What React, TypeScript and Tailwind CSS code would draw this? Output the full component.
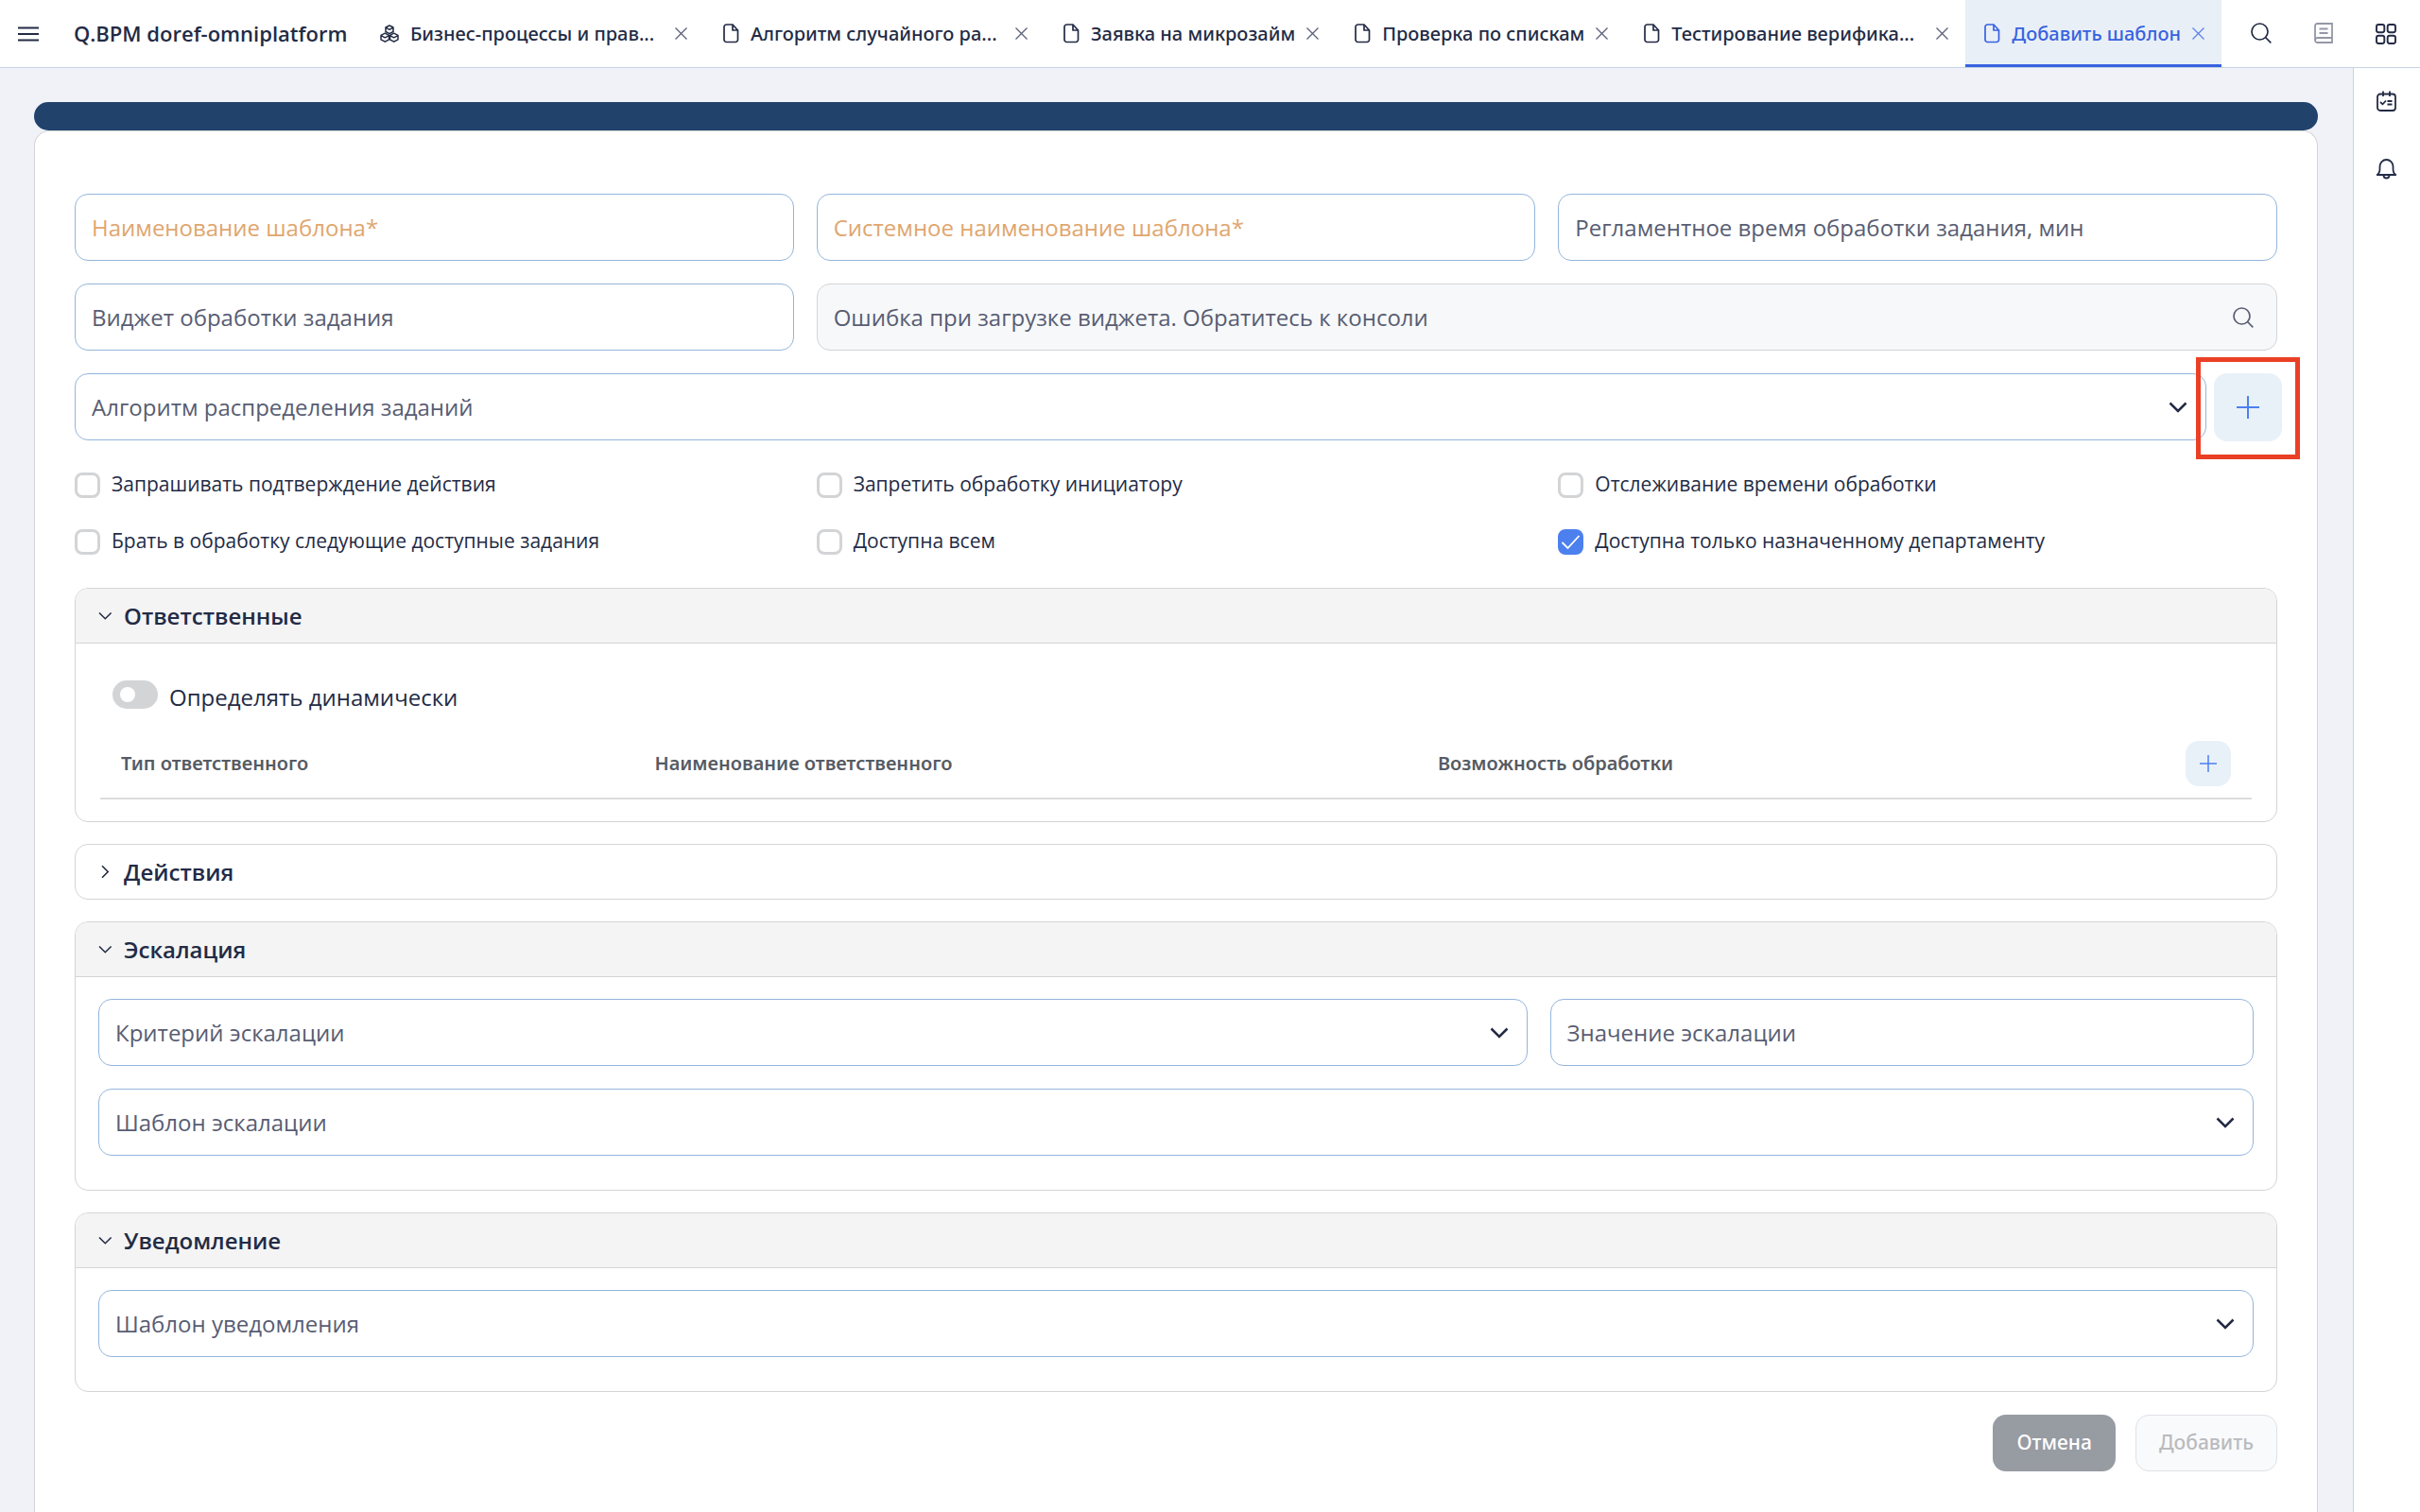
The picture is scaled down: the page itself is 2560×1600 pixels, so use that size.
import React, { useState } from "react";

function DocIcon() {
  return (
    <svg className="h-[22px] w-[17px] shrink-0" viewBox="0 0 17 22" fill="none" stroke="currentColor" strokeWidth="1.7" strokeLinejoin="round">
      <path d="M10 1H3.5A2.5 2.5 0 0 0 1 3.500V17A2.500 2.500 0 0 0 3.500 19.500H13A2.500 2.500 0 0 0 15.500 17V7Z" />
      <path d="M10 1V7H15.500" />
    </svg>
  );
}

function ProcessIcon() {
  return (
    <svg className="h-[22px] w-5 shrink-0" viewBox="0 0 20 22" fill="none" stroke="currentColor" strokeWidth="1.5" strokeLinejoin="round">
      <path d="M10 2L14 4V8.500L10 10.700L6 8.500V4ZM6 4.200L10 6.300L14 4.200" />
      <path d="M5.300 10.200L9.500 12.400V16.800L5.300 19.200L1 16.800V12.400ZM1 12.600L5.300 14.800L9.500 12.600" />
      <path d="M14.700 10.200L19 12.400V16.800L14.700 19.200L10.500 16.800V12.400ZM10.500 12.600L14.700 14.800L19 12.600" />
    </svg>
  );
}

function CloseIcon() {
  return (
    <svg className="size-[13px]" viewBox="0 0 13 13" stroke="currentColor" strokeWidth="1.3">
      <path d="M0.500 0.500L12.500 12.500M12.500 0.500L0.500 12.500" />
    </svg>
  );
}

function SearchIcon() {
  return (
    <svg className="size-[22px]" viewBox="0 0 22 22" fill="none" stroke="currentColor" strokeWidth="1.700">
      <circle cx="9.500" cy="9.500" r="8.500" />
      <path d="M15.500 15.500L21.300 21.300" />
    </svg>
  );
}

function BookIcon() {
  return (
    <svg className="size-[22px]" viewBox="0 0 22 22" fill="none" stroke="currentColor" strokeWidth="1.800">
      <path d="M20 1H4.500A2.500 2.500 0 0 0 2 3.500V18.500A2.500 2.500 0 0 0 4.500 21H20Z" />
      <path d="M2 18.500A2.500 2.500 0 0 1 4.500 16H20M6.500 6.500H15.500M6.500 11H15.500" />
    </svg>
  );
}

function AppsIcon() {
  return (
    <svg className="size-6" viewBox="0 0 24 24" fill="none" stroke="currentColor" strokeWidth="1.900">
      <rect x="2" y="2" width="8.300" height="8.300" rx="2.200" />
      <rect x="13.700" y="2" width="8.300" height="8.300" rx="2.200" />
      <rect x="2" y="13.700" width="8.300" height="8.300" rx="2.200" />
      <rect x="13.700" y="13.700" width="8.300" height="8.300" rx="2.200" />
    </svg>
  );
}

function TasksIcon() {
  return (
    <svg className="size-6" viewBox="0 0 24 24" fill="none" stroke="currentColor" strokeWidth="1.800">
      <rect x="2" y="4.500" width="19" height="17.500" rx="3" />
      <path d="M8 1.500V7M15 1.500V7M5 13L7.500 15.300L11 11.500M12.500 12H17.500M12.500 15.500H17.500" />
    </svg>
  );
}

function BellIcon() {
  return (
    <svg className="size-6" viewBox="0 0 24 24" fill="none" stroke="currentColor" strokeWidth="1.800" strokeLinejoin="round">
      <path d="M1.700 18C4 16.500 4.500 14.500 4.500 11.500V9A7 7 0 0 1 11.500 2A7 7 0 0 1 18.500 9V11.500C18.500 14.500 19 16.500 21.300 18Z" />
      <path d="M8.500 18.500A3 3 0 0 0 14.500 18.500" />
    </svg>
  );
}

function PlusIcon({ className }: { className: string }) {
  return (
    <svg className={className} viewBox="0 0 24 24" stroke="currentColor" strokeWidth="2">
      <path d="M12 0V24M0 12H24" />
    </svg>
  );
}

type TabProps = { label: string; icon?: React.ReactNode; active?: boolean; clipped?: boolean };

function Tab({ label, icon, active, clipped }: TabProps) {
  return (
    <div
      className={
        active
          ? "flex h-full items-center gap-3 border-b-[3px] border-[#3862e0] bg-[#e9eff7] pt-[3px] pr-[18px] pl-5 text-[#3862e0]"
          : "flex h-full items-center gap-3 pr-[18px] pl-5 text-[#232b45]"
      }
    >
      <button type="button" className="flex items-center gap-3 font-['Noto_Sans',sans-serif] text-xl font-medium whitespace-nowrap">
        {icon ?? <DocIcon />}
        <span className={clipped ? "w-[268px] text-left" : ""}>{label}</span>
      </button>
      <button type="button" aria-label="Закрыть вкладку" className={active ? "text-[#5c82ea]" : "text-[#5b6078]"}>
        <CloseIcon />
      </button>
    </div>
  );
}

const fieldBox = "h-[71px] w-full rounded-[14px] border border-[#94b5dc] bg-white px-[17px] text-2xl text-[#232b45] outline-none";

function TextField({ label, required }: { label: string; required?: boolean }) {
  return (
    <input
      type="text"
      aria-label={label}
      required={required}
      placeholder={label}
      className={`${fieldBox} ${required ? "placeholder:text-[#e0a66e]" : "placeholder:text-[#585d72]"} placeholder:opacity-100`}
    />
  );
}

function SelectField({ label }: { label: string }) {
  return (
    <div className="relative min-w-0 flex-1">
      <select aria-label={label} className={`${fieldBox} block appearance-none text-[#585d72]`} defaultValue="">
        <option value="">{label}</option>
      </select>
      <svg className="pointer-events-none absolute top-1/2 right-5 h-5 w-5 -translate-y-1/2 text-[#232b45]" viewBox="0 0 20 20" fill="none" stroke="currentColor" strokeWidth="2.500">
        <path d="M1.500 5.500L10 14L18.500 5.500" />
      </svg>
    </div>
  );
}

function CheckField({ label, checked }: { label: string; checked?: boolean }) {
  return (
    <label className="flex h-[60px] items-center gap-3 text-[21px] text-[#232b45]">
      <span className="relative size-[27px] shrink-0">
        <input
          type="checkbox"
          defaultChecked={checked}
          className="peer block size-[27px] appearance-none rounded-lg border-[3px] border-[#d3d4d6] bg-white checked:border-[#4c80ee] checked:bg-[#4c80ee]"
        />
        <svg className="pointer-events-none absolute inset-0 size-[27px] text-white opacity-0 peer-checked:opacity-100" viewBox="0 0 27 27" fill="none" stroke="currentColor" strokeWidth="1.800">
          <path d="M4.500 14L10.500 20L22.500 7" />
        </svg>
      </span>
      {label}
    </label>
  );
}

function Section({ title, open = true, children }: { title: string; open?: boolean; children?: React.ReactNode }) {
  const [shown, setShown] = useState(open);
  return (
    <section className="mb-[23px] overflow-hidden rounded-[14px] border border-[#d3d4d6] bg-white">
      <h2 className={shown ? "border-b border-[#d3d4d6] bg-[#f4f4f4]" : ""}>
        <button
          type="button"
          aria-expanded={shown}
          onClick={() => setShown(!shown)}
          className="flex h-[57px] w-full items-center gap-[11px] px-6 text-2xl font-semibold text-[#232b45]"
        >
          <svg className="size-4" viewBox="0 0 16 16" fill="none" stroke="currentColor" strokeWidth="1.600">
            <path d={shown ? "M1 4.500L7.300 10.700L13.600 4.500" : "M4 1.200L10.200 7.500L4 13.800"} />
          </svg>
          {title}
        </button>
      </h2>
      {shown && children}
    </section>
  );
}

export default function App() {
  return (
    <div className="flex min-h-screen flex-col bg-[#f0f2f8] font-['Open_Sans',sans-serif] text-[#232b45]">
      <header className="flex h-[72px] shrink-0 items-center border-b border-[#c5d3e4] bg-white">
        <button type="button" aria-label="Меню" className="ml-[19px]">
          <svg className="size-[22px]" viewBox="0 0 22 22" stroke="currentColor" strokeWidth="1.800">
            <path d="M0 4.500H22M0 11H22M0 17.500H22" />
          </svg>
        </button>
        <h1 className="ml-[37px] text-[22px] font-semibold whitespace-nowrap">Q.BPM doref-omniplatform</h1>
        <nav className="ml-auto flex h-full items-center">
          <Tab label="Бизнес-процессы и прав..." icon={<ProcessIcon />} clipped />
          <Tab label="Алгоритм случайного ра..." clipped />
          <Tab label="Заявка на микрозайм" />
          <Tab label="Проверка по спискам" />
          <Tab label="Тестирование верифика..." clipped />
          <Tab label="Добавить шаблон" active />
        </nav>
        <div className="mr-[3px] ml-[9px] flex">
          <button type="button" aria-label="Поиск" className="flex w-[66px] justify-center"><SearchIcon /></button>
          <button type="button" aria-label="Справочник" className="flex w-[66px] justify-center text-[#9498a6]"><BookIcon /></button>
          <button type="button" aria-label="Приложения" className="flex w-[66px] justify-center"><AppsIcon /></button>
        </div>
      </header>

      <div className="flex flex-1">
        <main className="flex min-w-0 flex-1 flex-col pt-9 pr-[37px] pl-9">
          <div className="h-[30px] shrink-0 rounded-full bg-[#21426b]" />
          <form className="flex-1 rounded-t-2xl border border-b-0 border-[#d3d4d6] bg-white px-[42px] pt-[66px]">
            <div className="grid grid-cols-3 gap-6">
              <TextField label="Наименование шаблона*" required />
              <TextField label="Системное наименование шаблона*" required />
              <TextField label="Регламентное время обработки задания, мин" />
              <TextField label="Виджет обработки задания" />
              <div className="relative col-span-2">
                <input
                  type="text"
                  disabled
                  aria-label="Виджет"
                  value="Ошибка при загрузке виджета. Обратитесь к консоли"
                  className="block h-[71px] w-full rounded-[14px] border border-[#d3d4d6] bg-[#f7f8fa] px-[17px] text-2xl text-[#585d72]"
                />
                <span className="pointer-events-none absolute inset-y-0 right-[25px] flex items-center text-[#585d72]"><SearchIcon /></span>
              </div>
            </div>

            <div className="mt-6 -mr-[5px] flex gap-2">
              <SelectField label="Алгоритм распределения заданий" />
              <div className="relative">
                <button type="button" aria-label="Добавить алгоритм" className="flex size-[72px] items-center justify-center rounded-[14px] bg-[#e9f1f8] text-[#4c80ee]">
                  <PlusIcon className="size-6" />
                </button>
                <span className="pointer-events-none absolute -inset-x-[19px] -top-[17px] -bottom-[19px] border-[5px] border-[#ea4025]" />
              </div>
            </div>

            <div className="mt-4 mb-[19px] grid grid-cols-3 gap-x-6">
              <CheckField label="Запрашивать подтверждение действия" />
              <CheckField label="Запретить обработку инициатору" />
              <CheckField label="Отслеживание времени обработки" />
              <CheckField label="Брать в обработку следующие доступные задания" />
              <CheckField label="Доступна всем" />
              <CheckField label="Доступна только назначенному департаменту" checked />
            </div>

            <Section title="Ответственные">
              <div className="px-[26px] pt-[39px] pb-[23px]">
                <label className="ml-[13px] flex h-[30px] w-fit items-center gap-3 text-2xl">
                  <input
                    type="checkbox"
                    role="switch"
                    className="relative h-[30px] w-12 appearance-none rounded-full bg-[#d3d4d6] before:absolute before:top-[7px] before:left-2 before:size-4 before:rounded-full before:bg-white checked:bg-[#4c80ee] checked:before:left-6"
                  />
                  <span className="pt-1.5">Определять динамически</span>
                </label>
                <table className="mt-[22px] w-full table-fixed text-left font-['Noto_Sans',sans-serif] text-xl text-[#565b63]">
                  <colgroup>
                    <col className="w-[24.8%]" />
                    <col className="w-[36.4%]" />
                    <col />
                    <col className="w-[92px]" />
                  </colgroup>
                  <thead>
                    <tr className="border-b-2 border-[#dcdddf]">
                      <th className="px-[22px] font-semibold">Тип ответственного</th>
                      <th className="px-[22px] font-semibold">Наименование ответственного</th>
                      <th className="px-[22px] font-semibold">Возможность обработки</th>
                      <th className="px-[22px] py-3">
                        <button type="button" aria-label="Добавить ответственного" className="flex size-12 items-center justify-center rounded-[14px] bg-[#e9f1f8] text-[#4c80ee]">
                          <PlusIcon className="size-[18px]" />
                        </button>
                      </th>
                    </tr>
                  </thead>
                </table>
              </div>
            </Section>

            <Section title="Действия" open={false} />

            <Section title="Эскалация">
              <div className="flex flex-col gap-6 px-6 pt-[23px] pb-9">
                <div className="grid grid-cols-[67fr_33fr] gap-6">
                  <SelectField label="Критерий эскалации" />
                  <TextField label="Значение эскалации" />
                </div>
                <SelectField label="Шаблон эскалации" />
              </div>
            </Section>

            <Section title="Уведомление">
              <div className="px-6 pt-[23px] pb-9">
                <SelectField label="Шаблон уведомления" />
              </div>
            </Section>

            <div className="flex justify-end gap-[21px] pt-px pb-10 font-['Noto_Sans',sans-serif] text-[21px] font-medium">
              <button type="button" className="h-[60px] rounded-[14px] bg-[#979ba2] px-[25px] text-white">Отмена</button>
              <button type="submit" disabled className="h-[60px] rounded-[14px] border border-[#dfe1e5] bg-[#f9fafc] px-6 text-[#b9bbbf]">Добавить</button>
            </div>
          </form>
        </main>

        <aside className="flex w-[71px] shrink-0 flex-col items-center gap-12 border-l border-[#c5d3e4] bg-white pt-[23px]">
          <button type="button" aria-label="Задачи"><TasksIcon /></button>
          <button type="button" aria-label="Уведомления"><BellIcon /></button>
        </aside>
      </div>
    </div>
  );
}
